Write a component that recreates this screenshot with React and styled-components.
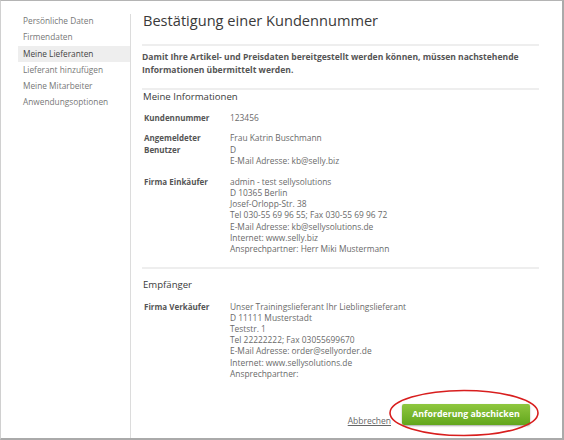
import React from 'react';
import styled, { createGlobalStyle } from 'styled-components';

const GlobalStyle = createGlobalStyle`
  html, body {
    margin: 0;
    padding: 0;
    background: #fff;
  }
  body {
    font-family: 'Open Sans', 'Noto Sans', sans-serif;
  }
  * {
    box-sizing: border-box;
  }
`;

const Frame = styled.div`
  width: 564px;
  height: 440px;
  border-top: 1px solid #b4b4b4;
  border-left: 1px solid #d0d0d0;
  border-right: 2px solid #aaaaaa;
  border-bottom: 2px solid #aaaaaa;
  display: flex;
  position: relative;
  overflow: hidden;
  background: #fff;
`;

const Sidebar = styled.nav`
  width: 129px;
  padding: 12px 0 0 17px;
  display: flex;
  flex-direction: column;
`;

const NavItem = styled.div`
  height: 16.3px;
  line-height: 16.3px;
  padding-left: 5px;
  font-size: 8.3px;
  color: ${(p) => (p.$active ? '#444' : '#777')};
  background: ${(p) => (p.$active ? '#eeeeee' : 'transparent')};
  white-space: nowrap;
`;

const Divider = styled.div`
  width: 1px;
  margin-top: 13px;
  background: #dcdcdc;
  align-self: stretch;
`;

const Main = styled.main`
  flex: 1;
  padding: 0 23px 0 11px;
  display: flex;
  flex-direction: column;
`;

const Title = styled.h1`
  margin: 9px 0 0 1px;
  font-size: 14.6px;
  line-height: 20px;
  font-weight: 400;
  color: #3a3a3a;
  white-space: nowrap;
`;

const Rule = styled.hr`
  border: none;
  height: 2px;
  flex-shrink: 0;
  background: #eeeeee;
  margin: ${(p) => p.$margin || '0'};
`;

const Intro = styled.p`
  margin: 0;
  font-size: 8.55px;
  line-height: 12.5px;
  font-weight: 700;
  color: #555;
`;

const SectionTitle = styled.h2`
  margin: ${(p) => p.$margin || '0'};
  font-size: 9.6px;
  line-height: 10px;
  font-weight: 400;
  color: #3a3a3a;
  padding-left: 1px;
`;

const InfoList = styled.div`
  display: flex;
  flex-direction: column;
  gap: 9.7px;
  padding-left: 2px;
`;

const InfoRow = styled.div`
  display: grid;
  grid-template-columns: 86px 1fr;
  font-size: 8.4px;
  line-height: 11.2px;
`;

const Label = styled.div`
  font-weight: 700;
  font-size: 8px;
  color: #555;
  padding-right: 8px;
`;

const Value = styled.div`
  color: #6a6a6a;
  white-space: nowrap;
`;

const Actions = styled.div`
  display: flex;
  justify-content: flex-end;
  align-items: flex-end;
  gap: 11px;
  margin-top: 24.5px;
  padding-right: 9px;
`;

const CancelLink = styled.a`
  font-size: 8.5px;
  line-height: 11px;
  color: #666;
  text-decoration: underline;
  margin-bottom: -1px;
`;

const SubmitButton = styled.button`
  width: 128px;
  height: 21.6px;
  border: none;
  border-radius: 2px;
  background: linear-gradient(#8fc73f, #62a61c);
  box-shadow: 0 1px 2px rgba(0, 0, 0, 0.35);
  color: #fff;
  font-family: 'Open Sans', 'Noto Sans', sans-serif;
  font-size: 8.8px;
  font-weight: 700;
  padding: 0;
  cursor: pointer;
`;

const Highlight = styled.svg`
  position: absolute;
  left: 387px;
  top: 387px;
  pointer-events: none;
`;

const navItems = [
  'Persönliche Daten',
  'Firmendaten',
  'Meine Lieferanten',
  'Lieferant hinzufügen',
  'Meine Mitarbeiter',
  'Anwendungsoptionen',
];

const myInfo = [
  { label: 'Kundennummer', lines: ['123456'] },
  {
    label: 'Angemeldeter Benutzer',
    lines: ['Frau Katrin Buschmann', 'D', 'E-Mail Adresse: kb@selly.biz'],
  },
  {
    label: 'Firma Einkäufer',
    lines: [
      'admin - test sellysolutions',
      'D 10365 Berlin',
      'Josef-Orlopp-Str. 38',
      'Tel 030-55 69 96 55; Fax 030-55 69 96 72',
      'E-Mail Adresse: kb@sellysolutions.de',
      'Internet: www.selly.biz',
      'Ansprechpartner: Herr Miki Mustermann',
    ],
  },
];

const recipient = [
  {
    label: 'Firma Verkäufer',
    lines: [
      'Unser Trainingslieferant Ihr Lieblingslieferant',
      'D 11111 Musterstadt',
      'Teststr. 1',
      'Tel 22222222; Fax 03055699670',
      'E-Mail Adresse: order@sellyorder.de',
      'Internet: www.sellysolutions.de',
      'Ansprechpartner:',
    ],
  },
];

const Info = ({ rows }) => (
  <InfoList>
    {rows.map((row) => (
      <InfoRow key={row.label}>
        <Label>{row.label}</Label>
        <Value>
          {row.lines.map((line, i) => (
            <div key={i}>{line}</div>
          ))}
        </Value>
      </InfoRow>
    ))}
  </InfoList>
);

const App = () => {
  return (
    <>
      <GlobalStyle />
      <Frame>
        <Sidebar>
          {navItems.map((item) => (
            <NavItem key={item} $active={item === 'Meine Lieferanten'}>
              {item}
            </NavItem>
          ))}
        </Sidebar>
        <Divider />
        <Main>
          <Title>Bestätigung einer Kundennummer</Title>
          <Rule $margin="14px 0 5px" />
          <Intro>
            Damit Ihre Artikel- und Preisdaten bereitgestellt werden können, müssen nachstehende
            Informationen übermittelt werden.
          </Intro>
          <Rule $margin="12px 0 1.5px" />
          <SectionTitle $margin="0 0 10px">Meine Informationen</SectionTitle>
          <Info rows={myInfo} />
          <Rule $margin="13px 0 11px" />
          <SectionTitle $margin="0 0 10.5px">Empfänger</SectionTitle>
          <Info rows={recipient} />
          <Actions>
            <CancelLink href="#">Abbrechen</CancelLink>
            <SubmitButton>Anforderung abschicken</SubmitButton>
          </Actions>
        </Main>
        <Highlight width="152" height="50" viewBox="0 0 152 50">
          <ellipse cx="76" cy="25" rx="74" ry="22.5" fill="none" stroke="#d81e1e" strokeWidth="1.6" />
        </Highlight>
      </Frame>
    </>
  );
};

export default App;
